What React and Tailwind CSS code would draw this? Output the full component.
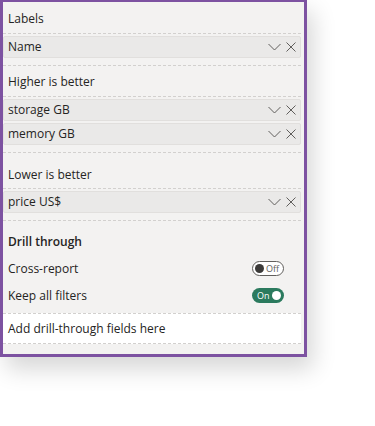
// one field pill inside a drop well
const Field = ({ name }) => (
  <div className="flex items-center h-[22px] bg-[#eae9e8] border border-[#e1dfdd] rounded-[2px] pl-[4px] pr-[4px]">
    <span className="flex-1 text-[12px] text-[#252423]">{name}</span>
    <svg width="13" height="8" viewBox="0 0 13 8" className="text-[#605e5c]">
      <polyline points="0.5,1 6.5,7 12.5,1" fill="none" stroke="currentColor" strokeWidth="1" />
    </svg>
    <svg width="10" height="10" viewBox="0 0 10 10" className="text-[#605e5c] ml-[5px]">
      <path d="M0.5 0.5 L9.5 9.5 M9.5 0.5 L0.5 9.5" fill="none" stroke="currentColor" strokeWidth="1" />
    </svg>
  </div>
);

const Well = ({ fields }) => (
  <div className="border-y border-dashed border-[#d2d0ce] pt-[2px] pb-[7px] mr-[3px] flex flex-col gap-[2px]">
    {fields.map((f) => (
      <Field key={f} name={f} />
    ))}
  </div>
);

const Toggle = ({ on }) =>
  on ? (
    <div className="w-[32px] h-[15px] rounded-full bg-[#2b7a5e] flex items-center justify-between pl-[5px] pr-[3px]">
      <span className="text-[9px] leading-none text-white">On</span>
      <span className="w-[9px] h-[9px] rounded-full bg-white" />
    </div>
  ) : (
    <div className="w-[32px] h-[15px] rounded-full bg-white border border-[#605e5c] flex items-center gap-[2px] pl-[2px]">
      <span className="w-[9px] h-[9px] rounded-full bg-[#3b3a39]" />
      <span className="text-[9px] leading-none text-[#605e5c]">Off</span>
    </div>
  );

export default function App() {
  return (
    <div
      className="w-[375px] h-[426px] bg-white overflow-hidden"
      style={{ fontFamily: '"Segoe UI", "Open Sans", sans-serif' }}
    >
      <div className="w-[307px] h-[358px] -mt-px border-[3px] border-[#7d52a1] bg-[#f3f2f1] shadow-[6px_12px_22px_rgba(0,0,0,0.16)] text-[#252423]">
        <div className="h-[31px] flex items-center pl-[5px] pt-[3px] text-[12px]">Labels</div>
        <Well fields={["Name"]} />
        <div className="h-[30px] flex items-center pl-[5px] pt-[2px] text-[12px]">Higher is better</div>
        <Well fields={["storage GB", "memory GB"]} />
        <div className="h-[35px] flex items-center pl-[5px] pt-[8px] text-[12px]">Lower is better</div>
        <Well fields={["price US$"]} />
        <div className="h-[34px] flex items-center pl-[5px] pt-[8px] text-[12px] font-semibold">Drill through</div>
        <div className="h-[27px] flex items-center justify-between pl-[5px] pr-[20px] text-[12px]">
          <span>Cross-report</span>
          <Toggle on={false} />
        </div>
        <div className="h-[27px] flex items-center justify-between pl-[5px] pr-[20px] text-[12px]">
          <span>Keep all filters</span>
          <Toggle on />
        </div>
        <div className="mt-[4px] mr-[3px] h-[31px] bg-white border-y border-dashed border-[#d2d0ce] flex items-center pl-[5px] text-[12px]">
          Add drill-through fields here
        </div>
      </div>
    </div>
  );
}
